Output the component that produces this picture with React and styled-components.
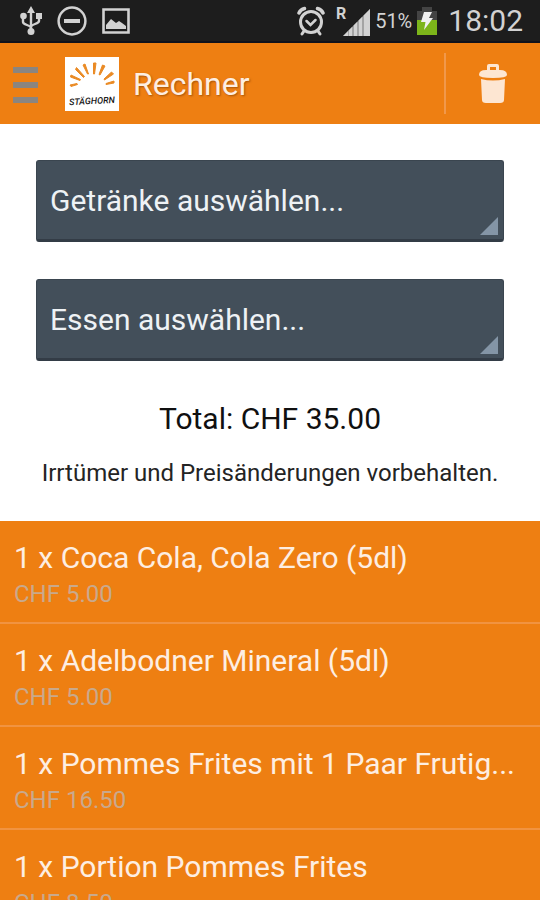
import { useState } from "react";
import styled, { createGlobalStyle } from "styled-components";

const GlobalStyle = createGlobalStyle`
  * {
    box-sizing: border-box;
  }
  body {
    margin: 0;
    background: #ffffff;
    font-family: Roboto, "Liberation Sans", sans-serif;
  }
`;

const Page = styled.div`
  display: flex;
  flex-direction: column;
  height: 100vh;
  overflow: hidden;
`;

const StatusBar = styled.div`
  display: flex;
  flex: none;
  align-items: center;
  justify-content: space-between;
  height: 43px;
  padding: 0 17px 0 20px;
  background: #1d1d1d;
  border-bottom: 2px solid #10121c;
  color: #d2d2d2;
`;

const StatusGroup = styled.div`
  display: flex;
  align-items: center;
  gap: ${({ gap }) => gap};
`;

const Battery = styled.span`
  display: flex;
  align-items: center;
  gap: 4px;
  font-size: 20px;
`;

const Clock = styled.span`
  font-size: 30px;
  line-height: 40px;
`;

const ActionBar = styled.header`
  display: flex;
  flex: none;
  align-items: center;
  height: 81px;
  padding-left: 12px;
  background: #ee7f12;
  color: #fdeee2;
`;

const BarButton = styled.button`
  display: flex;
  align-items: center;
  justify-content: center;
  padding: 0;
  border: 0;
  background: none;
  color: inherit;
  cursor: pointer;
`;

const DeleteButton = styled(BarButton)`
  width: 96px;
  height: 61px;
  margin-left: auto;
  border-left: 2px solid #f1984a;
`;

const Logo = styled.svg`
  margin: 0 14px 0 26px;
  background: #ffffff;
`;

const Title = styled.h1`
  margin: 0;
  font-size: 32px;
  font-weight: 400;
  line-height: 40px;
  text-shadow: 1px 1px 2px rgba(120, 55, 0, 0.6);
`;

const Form = styled.section`
  display: flex;
  flex: none;
  flex-direction: column;
  gap: 37px;
  padding: 36px 36px 0;
`;

const SelectContainer = styled.div`
  position: relative;
  &:after {
    position: absolute;
    content: "";
    right: 6px;
    bottom: 7px;
    border: 9px solid transparent;
    border-color: transparent #8495a6 #8495a6 transparent;
    pointer-events: none;
  }
`;

const Select = styled.select`
  display: block;
  width: 100%;
  height: 82px;
  padding: 0 13px;
  border: 1px solid #3a454f;
  border-bottom: 3px solid #333c46;
  border-radius: 3px;
  appearance: none;
  background: #434f5a;
  color: #eef2f5;
  font-family: inherit;
  font-size: 30px;
  cursor: pointer;
`;

const Summary = styled.section`
  flex: none;
  padding: 38px 24px 32px;
  text-align: center;
`;

const Total = styled.p`
  margin: 0 0 18px;
  color: #101010;
  font-size: 30px;
  line-height: 40px;
`;

const Note = styled.p`
  margin: 0;
  color: #242424;
  font-size: 24px;
  line-height: 32px;
`;

const List = styled.ul`
  flex: 1;
  min-height: 0;
  margin: 0;
  padding: 0;
  overflow-y: auto;
  scrollbar-width: none;
  background: #ee7f12;
  list-style: none;
`;

const ListItem = styled.li`
  padding: 17px 14px 12px;
  border-bottom: 2px solid #f19340;
`;

const ItemName = styled.div`
  overflow: hidden;
  color: #fdeee2;
  font-size: 30px;
  line-height: 40px;
  text-overflow: ellipsis;
  white-space: nowrap;
`;

const ItemPrice = styled.div`
  color: #c9a98c;
  font-size: 24px;
  line-height: 32px;
`;

const UsbIcon = () => (
  <svg width="22" height="30" viewBox="0 0 22 30" fill="none" stroke="#d2d2d2" strokeWidth="2.4">
    <path d="M11 5v20M3 12v4c0 3 8 3 8 6M19 12v3c0 3-8 3-8 6" />
    <path d="M11 0l4 7H7zM16 7h6v6h-6z" fill="#d2d2d2" stroke="none" />
    <circle cx="3.5" cy="10" r="3.3" fill="#d2d2d2" stroke="none" />
    <circle cx="11" cy="25.5" r="3.5" fill="#d2d2d2" stroke="none" />
  </svg>
);

const BlockedIcon = () => (
  <svg width="30" height="30" viewBox="0 0 30 30" fill="none" stroke="#d2d2d2">
    <circle cx="15" cy="15" r="13.4" strokeWidth="2.5" />
    <path d="M7 15h16" strokeWidth="4" />
  </svg>
);

const PictureIcon = () => (
  <svg width="28" height="26" viewBox="0 0 28 26">
    <path d="M1.5 1.5h25v23h-25z" fill="none" stroke="#d2d2d2" strokeWidth="2.6" />
    <path d="M4 21v-4l5-6 5 4 3-2 3 2 4 3v3z" fill="#d2d2d2" />
  </svg>
);

const AlarmIcon = () => (
  <svg width="28" height="30" viewBox="0 0 28 30" fill="none" stroke="#d2d2d2" strokeLinecap="round">
    <circle cx="14" cy="16" r="10.5" strokeWidth="3" />
    <path d="M9.5 15l4 4 5-5" strokeWidth="2.5" />
    <path d="M2 7C3 4.500 5 3 7.500 2.500M26 7c-1-2.500-3-4-5.500-4.500" strokeWidth="3.5" />
    <path d="M7 25l-2 3M21 25l2 3" strokeWidth="3" />
  </svg>
);

const SignalIcon = () => (
  <svg width="36" height="40" viewBox="-1 -4 36 40" fill="#d2d2d2">
    <text x="0" y="14" fontSize="16" fontWeight="700">R</text>
    <path d="M7 31l5-5v5zM12.5 25.5l4-4V31h-4zM17.5 20.5l4-4V31h-4zM22.5 15.5l4-4V31h-4zM27.5 10.5L34 4v27h-6.500z" />
    <path d="M7 31L34 4v27z" opacity="0.5" />
  </svg>
);

const BatteryIcon = () => (
  <svg width="22" height="30" viewBox="0 0 22 30">
    <path d="M6 1h10v4h5v10H1V5h5z" fill="#444444" />
    <path d="M1 14h20v15H1z" fill="#7db51a" />
    <path d="M8 6h8l-3 6h4L8 24l1.5-8H5z" fill="#f0f0f0" />
  </svg>
);

const MenuIcon = () => (
  <svg width="27" height="38" viewBox="0 0 27 38" fill="#8a8580">
    <path d="M1 2h25v6H1zM1 17h25v6H1zM1 32h25v6H1z" />
  </svg>
);

const rays = [
  "M5 28l7-1.500.500 1L6 29.500z",
  "M6 18l9.500 4.500-.500 1L5.500 20z",
  "M11.500 10.500l8 9-1 1-8-8z",
  "M20 7l3.500 10h-1L18 8z",
  "M28.500 6l2.500 0-1.500 11h-1z",
  "M37.500 8l2.500 1-5 9-1-.500z",
  "M46.500 15l2 2-9 6-.500-1z",
  "M49 24v2l-8 1.500V26.500z",
];

const StaghornLogo = () => (
  <Logo width="54" height="54" viewBox="0 0 54 54" role="img" aria-label="Stäghorn">
    <g fill="#ea8a24" stroke="#ea8a24" strokeLinejoin="round">
      {rays.map(d => (
        <path key={d} d={d} />
      ))}
    </g>
    <text
      x="4"
      y="47"
      fill="#161616"
      fontFamily="Roboto, sans-serif"
      fontSize="9"
      fontStyle="italic"
      fontWeight="500"
      transform="rotate(-3 27 44)"
    >
      STÄGHORN
    </text>
  </Logo>
);

const TrashIcon = () => (
  <svg width="30" height="42" viewBox="0 0 30 42" fill="#fde6d2">
    <path d="M9 8V3q0-2 2-2h8q2 0 2 2v5h-3V4h-6v4z" />
    <path d="M1 12q0-5 7-5h14q7 0 7 5 0 3-14 3T1 12z" />
    <path d="M3 16q12 3 24 0l-1 21q0 3-4 3H8q-4 0-4-3z" />
  </svg>
);

const initialItems = [
  { id: 1, name: "1 x Coca Cola, Cola Zero (5dl)", price: "CHF 5.00" },
  { id: 2, name: "1 x Adelbodner Mineral (5dl)", price: "CHF 5.00" },
  { id: 3, name: "1 x Pommes Frites mit 1 Paar Frutig...", price: "CHF 16.50" },
  { id: 4, name: "1 x Portion Pommes Frites", price: "CHF 8.50" },
];

const Dropdown = ({ label }) => (
  <SelectContainer>
    <Select aria-label={label} defaultValue="">
      <option value="">{label}</option>
    </Select>
  </SelectContainer>
);

const App = () => {
  const [items, setItems] = useState(initialItems);

  return (
    <Page>
      <GlobalStyle />
      <StatusBar>
        <StatusGroup gap="15px">
          <UsbIcon />
          <BlockedIcon />
          <PictureIcon />
        </StatusGroup>
        <StatusGroup gap="10px">
          <AlarmIcon />
          <StatusGroup gap="4px">
            <SignalIcon />
            <Battery>
              51%
              <BatteryIcon />
            </Battery>
          </StatusGroup>
          <Clock>18:02</Clock>
        </StatusGroup>
      </StatusBar>
      <ActionBar>
        <BarButton aria-label="Menü">
          <MenuIcon />
        </BarButton>
        <StaghornLogo />
        <Title>Rechner</Title>
        <DeleteButton aria-label="Löschen" onClick={() => setItems([])}>
          <TrashIcon />
        </DeleteButton>
      </ActionBar>
      <Form>
        <Dropdown label="Getränke auswählen..." />
        <Dropdown label="Essen auswählen..." />
      </Form>
      <Summary>
        <Total>Total: CHF {items.length ? "35.00" : "0.00"}</Total>
        <Note>Irrtümer und Preisänderungen vorbehalten.</Note>
      </Summary>
      <List>
        {items.map(item => (
          <ListItem key={item.id}>
            <ItemName>{item.name}</ItemName>
            <ItemPrice>{item.price}</ItemPrice>
          </ListItem>
        ))}
      </List>
    </Page>
  );
};

export default App;
